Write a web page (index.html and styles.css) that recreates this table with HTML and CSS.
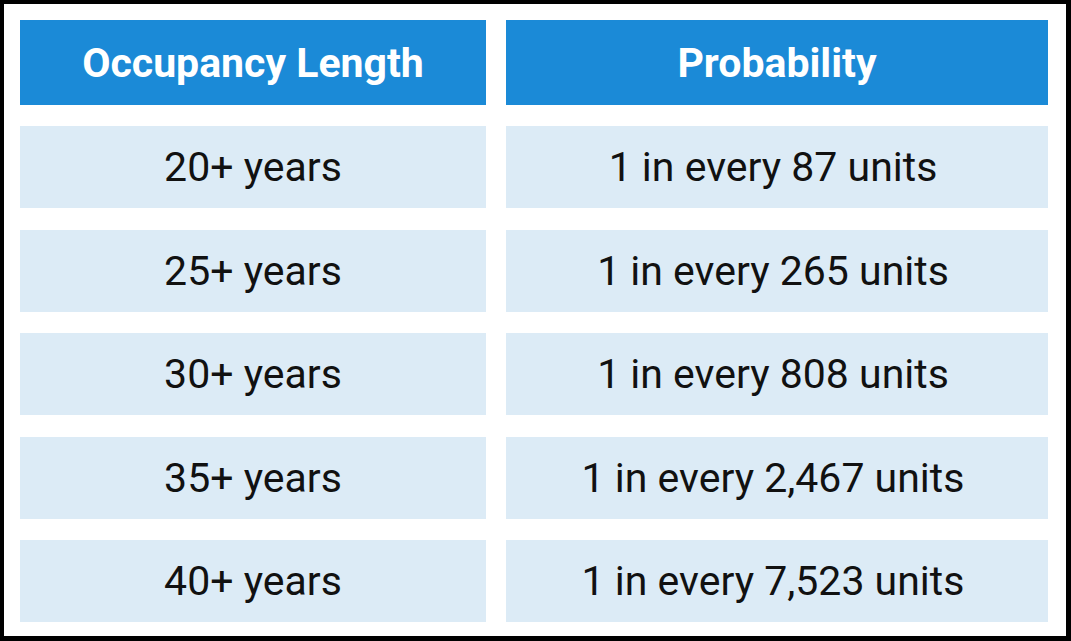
FILE: index.html
```html
<!doctype html>
<html lang="en">
  <head>
    <meta charset="UTF-8" />
    <meta name="viewport" content="width=device-width, initial-scale=1.0" />
    <title>Occupancy Length Probability</title>
    <link rel="stylesheet" href="styles.css">
  </head>
  <body>
    <div class="frame">
        <div class="table">
            <div class="cell head">Occupancy Length</div>
            <div class="cell head">Probability</div>

            <div class="cell">20+ years</div>
            <div class="cell prob">1 in every 87 units</div>

            <div class="cell">25+ years</div>
            <div class="cell prob">1 in every 265 units</div>

            <div class="cell">30+ years</div>
            <div class="cell prob">1 in every 808 units</div>

            <div class="cell">35+ years</div>
            <div class="cell prob">1 in every 2,467 units</div>

            <div class="cell">40+ years</div>
            <div class="cell prob">1 in every 7,523 units</div>
        </div>
    </div>
  </body>
</html>
```

FILE: styles.css
```css
* {
    box-sizing: border-box;
}

body {
    margin: 0;
    padding: 0;
    background-color: #fff;
    font-family: Roboto, "Liberation Sans", Arial, sans-serif;
}

.frame {
    width: 1071px;
    height: 641px;
    border: 4px solid #000;
    border-right-width: 5px;
    border-bottom-width: 5px;
    padding: 16px 18px 14px 16px;
    background-color: #fff;
}

.table {
    display: grid;
    grid-template-columns: 466px 542px;
    grid-template-rows: 85px repeat(5, 82px);
    column-gap: 20px;
    row-gap: 21.4px;
}

.cell {
    display: flex;
    align-items: center;
    justify-content: center;
    background-color: #dcebf6;
    color: #111;
    font-size: 41px;
}

.cell.prob {
    padding-right: 8px;
}

.cell.head {
    background-color: #1b8ad7;
    color: #fff;
    font-weight: bold;
    font-size: 41px;
}
```
